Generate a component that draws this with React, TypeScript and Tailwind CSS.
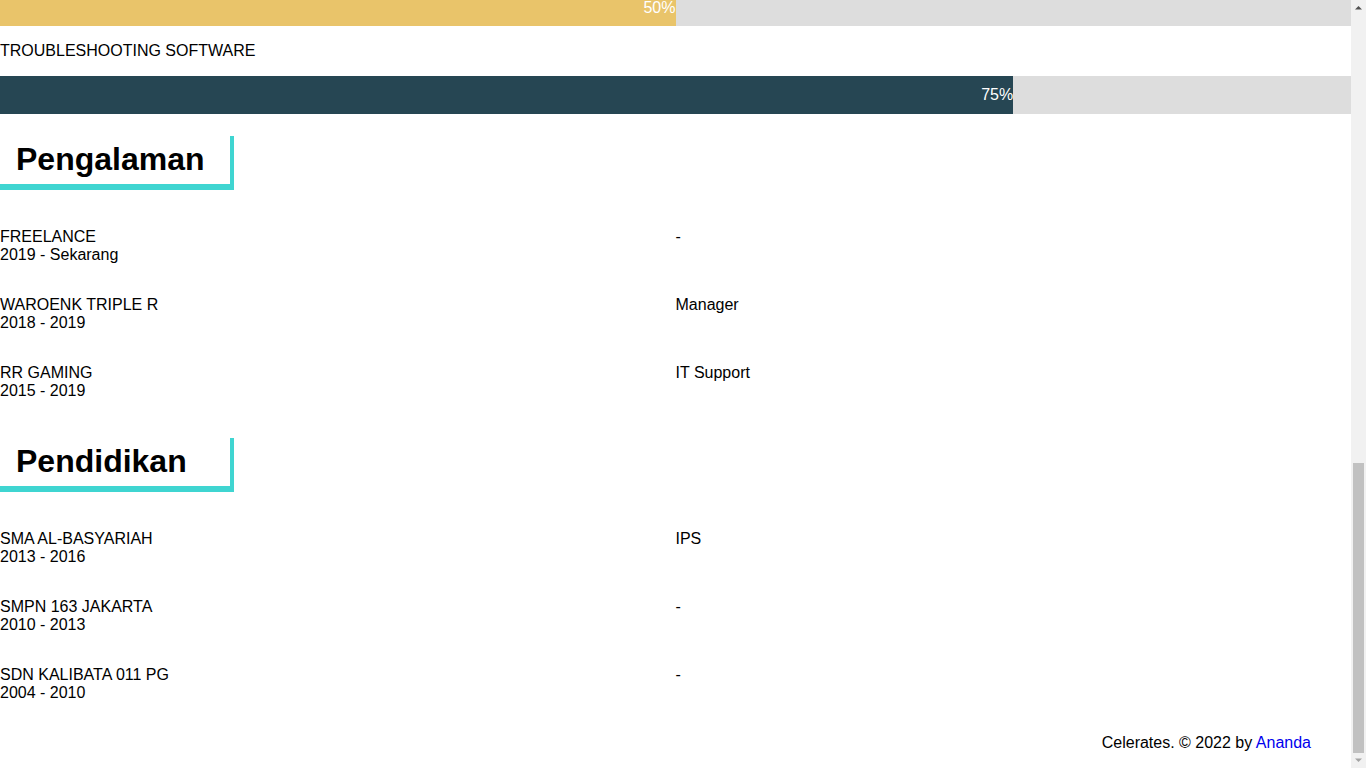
import React from 'react';

type Entry = { place: string; years: string; role: string };

const experience: Entry[] = [
  { place: 'FREELANCE', years: '2019 - Sekarang', role: '-' },
  { place: 'WAROENK TRIPLE R', years: '2018 - 2019', role: 'Manager' },
  { place: 'RR GAMING', years: '2015 - 2019', role: 'IT Support' },
];

const education: Entry[] = [
  { place: 'SMA AL-BASYARIAH', years: '2013 - 2016', role: 'IPS' },
  { place: 'SMPN 163 JAKARTA', years: '2010 - 2013', role: '-' },
  { place: 'SDN KALIBATA 011 PG', years: '2004 - 2010', role: '-' },
];

function SectionTitle({ title }: { title: string }) {
  return (
    <div className="w-[234px] h-[54px] box-border border-r-4 border-b-[6px] border-[#3fd5d1] pl-4">
      <h2 className="text-[32px] font-bold leading-[46px] text-black">{title}</h2>
    </div>
  );
}

function Bar({ level, color, top }: { level: number; color: string; top?: boolean }) {
  return (
    <div className={`bg-[#dddddd] ${top ? 'h-[26px]' : 'h-[38px]'}`}>
      <div
        className={`${color} h-full text-right text-white ${top ? 'leading-[16px]' : 'pt-[10px] leading-[18px]'}`}
        style={{ width: `${level}%` }}
      >
        {level}%
      </div>
    </div>
  );
}

function Timeline({ items }: { items: Entry[] }) {
  return (
    <div className="grid grid-cols-2 gap-y-8 leading-[18px]">
      {items.map((item) => (
        <React.Fragment key={item.place}>
          <div>
            <div>{item.place}</div>
            <div>{item.years}</div>
          </div>
          <div>{item.role}</div>
        </React.Fragment>
      ))}
    </div>
  );
}

function FakeScrollbar() {
  return (
    <div className="w-[15px] h-screen bg-[#f1f1f1] flex flex-col items-center">
      <svg width="15" height="15" viewBox="0 0 15 15" className="shrink-0">
        <path d="M4 9.5 L7.5 6 L11 9.5 Z" fill="#505050" />
      </svg>
      <div className="flex-1 w-full relative">
        {/* thumb */}
        <div className="absolute left-[2px] right-[2px] top-[448px] h-[290px] bg-[#c1c1c1]" />
      </div>
      <svg width="15" height="15" viewBox="0 0 15 15" className="shrink-0">
        <path d="M4 5.5 L11 5.5 L7.5 9 Z" fill="#a3a3a3" />
      </svg>
    </div>
  );
}

export default function App() {
  return (
    <div className="flex h-screen overflow-hidden bg-white text-black text-base font-['Liberation_Sans',Arial,sans-serif]">
      <main className="flex-1 min-w-0">
        {/* Skills (end of list) */}
        <Bar level={50} color="bg-[#e9c46a]" top />
        <p className="my-4 leading-[18px]">TROUBLESHOOTING SOFTWARE</p>
        <Bar level={75} color="bg-[#264653]" />

        {/* Pengalaman */}
        <section className="mt-[22px]">
          <SectionTitle title="Pengalaman" />
          <div className="mt-[38px]">
            <Timeline items={experience} />
          </div>
        </section>

        {/* Pendidikan */}
        <section className="mt-[38px]">
          <SectionTitle title="Pendidikan" />
          <div className="mt-[38px]">
            <Timeline items={education} />
          </div>
        </section>

        <footer className="pt-8 pr-10 text-right leading-[18px]">
          Celerates. © 2022 by <a href="#" className="text-[#0000ee]">Ananda</a>
        </footer>
      </main>
      <FakeScrollbar />
    </div>
  );
}
